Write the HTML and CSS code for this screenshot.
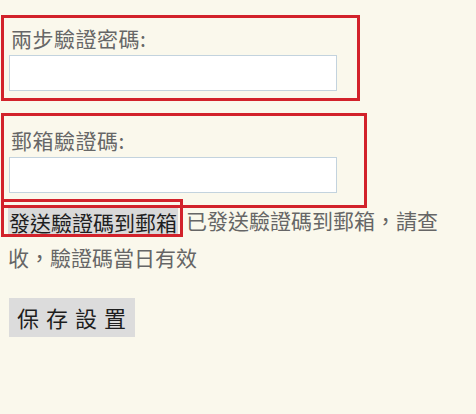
FILE: index.html
```html
<!DOCTYPE html>
<html lang="zh-Hant">
<head>
<meta charset="utf-8">
<link rel="stylesheet" href="styles.css">
</head>
<body>
<div class="page">
  <div class="field first">
    <label class="label">兩步驗證密碼:</label>
    <input class="input" type="text">
  </div>
  <div class="field second">
    <label class="label">郵箱驗證碼:</label>
    <input class="input" type="text">
  </div>
  <p class="send-row"><button class="send-btn" type="button">發送驗證碼到郵箱</button><span class="send-note">已發送驗證碼到郵箱，請查收，驗證碼當日有效</span></p>
  <button class="save-btn" type="button">保存設置</button>

  <div class="mark mark-1"></div>
  <div class="mark mark-2"></div>
  <div class="mark mark-3"></div>
</div>
</body>
</html>
```

FILE: styles.css
```css
html, body {
  margin: 0;
  padding: 0;
  background: #faf8ec;
}
body {
  font-family: "Noto Sans CJK TC", "Noto Sans CJK SC", sans-serif;
  color: #666;
}
.page {
  position: relative;
  width: 442px;
  height: 414px;
  padding: 0 0 0 8px;
  box-sizing: content-box;
}
.field {
  display: flex;
  flex-direction: column;
  align-items: flex-start;
}
.first {
  padding-top: 24px;
}
.second {
  padding-top: 35px;
}
.label {
  font-size: 21px;
  line-height: 28px;
  height: 28px;
  padding-left: 3px;
  margin-bottom: 3px;
  color: #666;
  letter-spacing: 0.5px;
}
.input {
  margin: 0 0 0 1px;
  width: 328px;
  height: 36px;
  box-sizing: border-box;
  border: 1px solid #c3d3de;
  background: #fff;
  padding: 0 4px;
  outline: none;
}
.send-row {
  margin: 9px 0 0;
  font-size: 21px;
  line-height: 37px;
  color: #666;
}
.send-btn {
  font-family: inherit;
  font-size: 21px;
  line-height: 28px;
  height: 28px;
  padding: 0 1px 0 1px;
  margin: 0 8px 0 0;
  border: none;
  background: #d9d9d9;
  color: #1e1e1e;
  vertical-align: middle;
  position: relative;
  top: -1px;
}
.save-btn {
  display: block;
  margin: 22px 0 0 1px;
  font-family: inherit;
  font-size: 22px;
  line-height: 39px;
  height: 39px;
  width: 126px;
  padding: 0 0 0 8px;
  text-align: left;
  letter-spacing: 7px;
  border: none;
  background: #dcdcdc;
  color: #1e1e1e;
}
.mark {
  position: absolute;
  border: 3px solid #d2222b;
  box-sizing: border-box;
}
.mark-1 {
  left: 1px;
  top: 15px;
  width: 359px;
  height: 86px;
}
.mark-2 {
  left: 1px;
  top: 113px;
  width: 366px;
  height: 95px;
}
.mark-3 {
  left: 1px;
  top: 199px;
  width: 182px;
  height: 38px;
}
```
